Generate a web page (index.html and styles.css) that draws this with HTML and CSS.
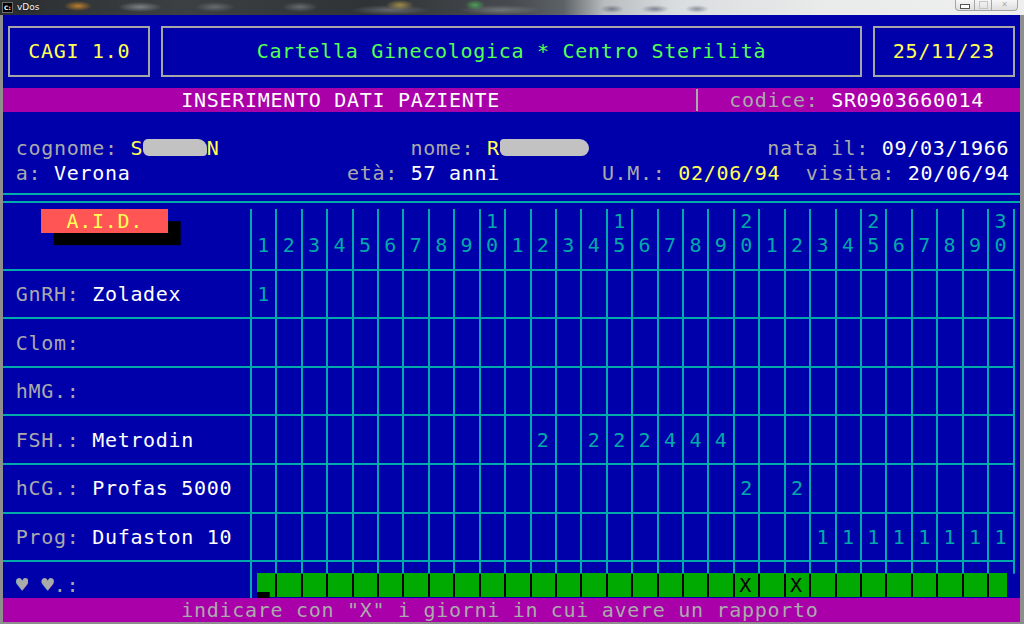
FILE: index.html
```html
<!DOCTYPE html>
<html lang="it">
<head>
<meta charset="utf-8">
<title>vDos</title>
<link rel="stylesheet" href="styles.css">
</head>
<body>
<div class="window">
  <div class="titlebar">
    <span class="appicon">C:</span>
    <span class="apptitle">vDos</span>
    <div class="winbtns">
      <span class="wb min"></span>
      <span class="wb max"></span>
      <span class="wb close">✕</span>
    </div>
  </div>
  <div class="client">
    <main class="screen">
      <header class="banner">
        <div class="box yellow">CAGI 1.0</div>
        <div class="box wide lgreen">Cartella Ginecologica * Centro Sterilità</div>
        <div class="box yellow">25/11/23</div>
      </header>
      <div class="line bar">              INSERIMENTO DATI PAZIENTE               <span class="vbar"></span>  <span class="k">codice: </span>SR0903660014</div>
      <div class="line"></div>
      <div class="line"> <span class="k">cognome: </span><span class="yellow">S</span><span class="blob short"></span><span class="yellow">N</span>               <span class="k">nome: </span><span class="yellow">R</span><span class="blob long"></span>              <span class="k">nata il: </span>09/03/1966</div>
      <div class="line"> <span class="k">a: </span>Verona                 <span class="k">età: </span>57 anni        <span class="k">U.M.: </span><span class="yellow">02/06/94</span>  <span class="k">visita: </span>20/06/94</div>
      <div class="line rule2"></div>
      <section class="chart">
        <div class="chead">
          <div class="lbl"><div class="aid">A.I.D.</div></div>
          <div class="days">
            <span><br>1</span><span><br>2</span><span><br>3</span><span><br>4</span><span><br>5</span>
            <span><br>6</span><span><br>7</span><span><br>8</span><span><br>9</span><span>1<br>0</span>
            <span><br>1</span><span><br>2</span><span><br>3</span><span><br>4</span><span>1<br>5</span>
            <span><br>6</span><span><br>7</span><span><br>8</span><span><br>9</span><span>2<br>0</span>
            <span><br>1</span><span><br>2</span><span><br>3</span><span><br>4</span><span>2<br>5</span>
            <span><br>6</span><span><br>7</span><span><br>8</span><span><br>9</span><span>3<br>0</span>
            <span class="end"></span>
          </div>
        </div>
        <div class="crow">
          <div class="lbl"><span class="k">GnRH: </span>Zoladex</div>
          <div class="days">
            <span>1</span><span></span><span></span><span></span><span></span><span></span><span></span><span></span><span></span><span></span>
            <span></span><span></span><span></span><span></span><span></span><span></span><span></span><span></span><span></span><span></span>
            <span></span><span></span><span></span><span></span><span></span><span></span><span></span><span></span><span></span><span></span>
            <span class="end"></span>
          </div>
        </div>
        <div class="crow">
          <div class="lbl"><span class="k">Clom:</span></div>
          <div class="days">
            <span></span><span></span><span></span><span></span><span></span><span></span><span></span><span></span><span></span><span></span>
            <span></span><span></span><span></span><span></span><span></span><span></span><span></span><span></span><span></span><span></span>
            <span></span><span></span><span></span><span></span><span></span><span></span><span></span><span></span><span></span><span></span>
            <span class="end"></span>
          </div>
        </div>
        <div class="crow">
          <div class="lbl"><span class="k">hMG.:</span></div>
          <div class="days">
            <span></span><span></span><span></span><span></span><span></span><span></span><span></span><span></span><span></span><span></span>
            <span></span><span></span><span></span><span></span><span></span><span></span><span></span><span></span><span></span><span></span>
            <span></span><span></span><span></span><span></span><span></span><span></span><span></span><span></span><span></span><span></span>
            <span class="end"></span>
          </div>
        </div>
        <div class="crow">
          <div class="lbl"><span class="k">FSH.: </span>Metrodin</div>
          <div class="days">
            <span></span><span></span><span></span><span></span><span></span><span></span><span></span><span></span><span></span><span></span>
            <span></span><span>2</span><span></span><span>2</span><span>2</span><span>2</span><span>4</span><span>4</span><span>4</span><span></span>
            <span></span><span></span><span></span><span></span><span></span><span></span><span></span><span></span><span></span><span></span>
            <span class="end"></span>
          </div>
        </div>
        <div class="crow">
          <div class="lbl"><span class="k">hCG.: </span>Profas 5000</div>
          <div class="days">
            <span></span><span></span><span></span><span></span><span></span><span></span><span></span><span></span><span></span><span></span>
            <span></span><span></span><span></span><span></span><span></span><span></span><span></span><span></span><span></span><span>2</span>
            <span></span><span>2</span><span></span><span></span><span></span><span></span><span></span><span></span><span></span><span></span>
            <span class="end"></span>
          </div>
        </div>
        <div class="crow">
          <div class="lbl"><span class="k">Prog: </span>Dufaston 10</div>
          <div class="days">
            <span></span><span></span><span></span><span></span><span></span><span></span><span></span><span></span><span></span><span></span>
            <span></span><span></span><span></span><span></span><span></span><span></span><span></span><span></span><span></span><span></span>
            <span></span><span></span><span>1</span><span>1</span><span>1</span><span>1</span><span>1</span><span>1</span><span>1</span><span>1</span>
            <span class="end"></span>
          </div>
        </div>
        <div class="crow hrow">
          <div class="lbl"><span class="k"><span class="heart">♥</span> <span class="heart">♥</span>.:</span></div>
          <div class="days">
            <span class="cur"></span><span></span><span></span><span></span><span></span><span></span><span></span><span></span><span></span><span></span>
            <span></span><span></span><span></span><span></span><span></span><span></span><span></span><span></span><span></span><span>X</span>
            <span></span><span>X</span><span></span><span></span><span></span><span></span><span></span><span></span><span></span><span></span>
            <span class="end"></span>
          </div>
        </div>
      </section>
      <div class="line bar hint">              indicare con "X" i giorni in cui avere un rapporto</div>
    </main>
  </div>
</div>
</body>
</html>
```
FILE: styles.css
```css
:root {
  --cw: 12.7125px;
  --rh: 24.28px;
  --blue: #0000aa;
  --cyan: #00aaaa;
  --gray: #aaaaaa;
  --yellow: #ffff55;
  --lgreen: #55ff55;
  --magenta: #aa00aa;
  --green: #00aa00;
  --lred: #ff5555;
}

* {
  box-sizing: border-box;
  margin: 0;
  padding: 0;
}

body {
  width: 1024px;
  height: 624px;
  overflow: hidden;
  background: #ffffff;
}

/* window chrome */
.window {
  width: 1024px;
  height: 624px;
  display: flex;
  flex-direction: column;
  background: #8e8e8e;
}

.titlebar {
  height: 15px;
  flex: none;
  display: flex;
  align-items: center;
  padding-left: 2px;
  background:
    radial-gradient(ellipse 14px 5px at 78px 6px, rgba(235, 150, 40, .75), transparent),
    radial-gradient(ellipse 22px 5px at 140px 7px, rgba(210, 210, 210, .45), transparent),
    radial-gradient(ellipse 20px 5px at 215px 7px, rgba(190, 190, 190, .35), transparent),
    radial-gradient(ellipse 18px 5px at 300px 7px, rgba(200, 200, 200, .35), transparent),
    radial-gradient(ellipse 14px 5px at 400px 5px, rgba(230, 190, 80, .6), transparent),
    radial-gradient(ellipse 10px 5px at 475px 5px, rgba(80, 200, 90, .7), transparent),
    radial-gradient(ellipse 40px 5px at 390px 10px, rgba(200, 200, 200, .35), transparent),
    radial-gradient(ellipse 40px 5px at 500px 10px, rgba(200, 200, 200, .35), transparent),
    radial-gradient(ellipse 12px 4px at 612px 9px, rgba(60, 70, 90, .55), transparent),
    radial-gradient(ellipse 14px 4px at 655px 9px, rgba(60, 70, 90, .55), transparent),
    radial-gradient(ellipse 12px 4px at 697px 9px, rgba(60, 70, 90, .5), transparent),
    linear-gradient(90deg, #2a2e31 0%, #3c4043 18%, #2f3336 36%, #474b4f 50%, #5d6266 55%, #b8bcbf 59%, #dadddf 66%, #e9eaea 80%, #efefef 100%);
}

.appicon {
  width: 11px;
  height: 11px;
  background: #000;
  border: 1px solid #6c6c6c;
  color: #fff;
  font: bold 6px/9px "DejaVu Sans", sans-serif;
  text-align: center;
}

.apptitle {
  margin-left: 4px;
  font: 9px/15px "DejaVu Sans", sans-serif;
  color: #f4f4f4;
  text-shadow: 0 0 3px rgba(0, 0, 0, .6);
}

.winbtns {
  margin-left: auto;
  margin-right: 6px;
  align-self: flex-start;
  display: flex;
}

.wb {
  height: 11px;
  border: 1px solid #a4a4a4;
  border-top: none;
  background: linear-gradient(#f7f7f7, #dedede);
  display: flex;
  align-items: center;
  justify-content: center;
  font: 8px/1 "DejaVu Sans", sans-serif;
  color: #b0b0b0;
}

.wb.min {
  width: 20px;
  border-radius: 0 0 0 4px;
}

.wb.min::after {
  content: "";
  width: 8px;
  height: 3px;
  margin-top: 3px;
  border: 1px solid #555;
  background: #fff;
}

.wb.max {
  width: 17px;
  border-left: none;
}

.wb.max::after {
  content: "";
  width: 7px;
  height: 6px;
  border: 1px solid #c4c4c4;
}

.wb.close {
  width: 26px;
  border-left: none;
  border-radius: 0 0 4px 0;
}

.client {
  flex: 1;
  display: flex;
  padding: 0 4px 2px 3px;
}

/* text-mode screen: 80 x 25 cells */
.screen {
  width: 1017px;
  height: 607px;
  flex: none;
  display: flex;
  flex-direction: column;
  background: var(--blue);
  color: #ffffff;
  font-family: "DejaVu Sans Mono", monospace;
  font-size: 20px;
  letter-spacing: 0.7px;
  line-height: var(--rh);
}

.k { color: var(--gray); }
.yellow { color: var(--yellow); }
.lgreen { color: var(--lgreen); }

.banner {
  height: calc(3 * var(--rh));
  flex: none;
  display: flex;
  gap: calc(var(--cw) - 2px);
  padding: calc(.5 * var(--rh) - 1px) calc(.5 * var(--cw) - 1px);
}

.box {
  width: calc(11 * var(--cw) + 2px);
  border: 2px solid #a6a6a6;
  display: flex;
  align-items: center;
  justify-content: center;
  white-space: pre;
}

.box.wide {
  width: calc(55 * var(--cw) + 2px);
}

.line {
  height: var(--rh);
  flex: none;
  white-space: pre;
}

.bar {
  background: var(--magenta);
}

.hint {
  color: var(--gray);
}

.vbar {
  display: inline-block;
  width: var(--cw);
  height: var(--rh);
  vertical-align: top;
  background: linear-gradient(var(--gray), var(--gray)) center / 2px calc(100% - 2px) no-repeat;
}

/* redaction marks over the name fields */
.blob {
  display: inline-block;
  height: 17px;
  margin-top: 3px;
  vertical-align: top;
  background: #c2c2c2;
}

.blob.short {
  width: calc(5 * var(--cw));
  border-radius: 5px 9px 4px 6px;
}

.blob.long {
  width: calc(7 * var(--cw));
  border-radius: 4px 10px 8px 6px;
}

.rule2 {
  padding-top: 8px;
}

.rule2::before {
  content: "";
  display: block;
  height: 6px;
  border-top: 2px solid var(--cyan);
  border-bottom: 2px solid var(--cyan);
}

/* monthly chart */
.chart {
  height: calc(16 * var(--rh));
  flex: none;
  display: flex;
  flex-direction: column;
}

.chead {
  height: calc(2.5 * var(--rh) - 1px);
  display: flex;
}

.crow {
  height: calc(2 * var(--rh));
  width: calc(79.5 * var(--cw) + 1px);
  display: flex;
  border-top: 2px solid var(--cyan);
}

.crow.hrow {
  height: calc(1.5 * var(--rh) + 1px);
}

.lbl {
  width: calc(19.5 * var(--cw) - 1px);
  flex: none;
  padding-left: var(--cw);
  display: flex;
  align-items: center;
  white-space: pre;
}

.chead .lbl {
  padding-left: calc(3 * var(--cw));
  align-items: flex-start;
}

.hrow .lbl {
  align-items: flex-end;
}

.heart {
  display: inline-block;
  width: var(--cw);
  height: var(--rh);
  overflow: hidden;
  vertical-align: top;
  font-size: 21px;
  letter-spacing: 0;
  line-height: 25px;
  text-align: center;
}

.aid {
  width: calc(10 * var(--cw));
  height: var(--rh);
  background: var(--lred);
  color: var(--yellow);
  text-align: center;
  box-shadow: var(--cw) calc(.5 * var(--rh)) 0 #000;
}

.days {
  display: flex;
  color: var(--cyan);
}

.days > span {
  width: calc(2 * var(--cw));
  flex: none;
  border-left: 2px solid var(--cyan);
  display: flex;
  align-items: center;
  justify-content: center;
}

.days > .end {
  width: 2px;
}

.chead .days > span {
  display: block;
  text-align: center;
}

/* the row where the days are ticked: green field with black separators */
.hrow .days {
  color: #000;
  background: linear-gradient(var(--green), var(--green)) calc(.5 * var(--cw) + 1px) 100% / calc(59 * var(--cw)) var(--rh) no-repeat;
}

.hrow .days > span {
  border-left: none;
  align-items: flex-end;
  background:
    linear-gradient(var(--cyan), var(--cyan)) 0 0 / 2px calc(100% - var(--rh)) no-repeat,
    linear-gradient(#000, #000) 0 100% / 2px var(--rh) no-repeat;
}

.hrow .days > .cur {
  background:
    linear-gradient(#000, #000) calc(.5 * var(--cw) + 1px) 100% / var(--cw) 6px no-repeat,
    linear-gradient(var(--cyan), var(--cyan)) 0 0 / 2px 100% no-repeat;
}

.hrow .days > .end {
  background: linear-gradient(var(--cyan), var(--cyan)) 0 0 / 2px calc(100% - var(--rh)) no-repeat;
}
```
